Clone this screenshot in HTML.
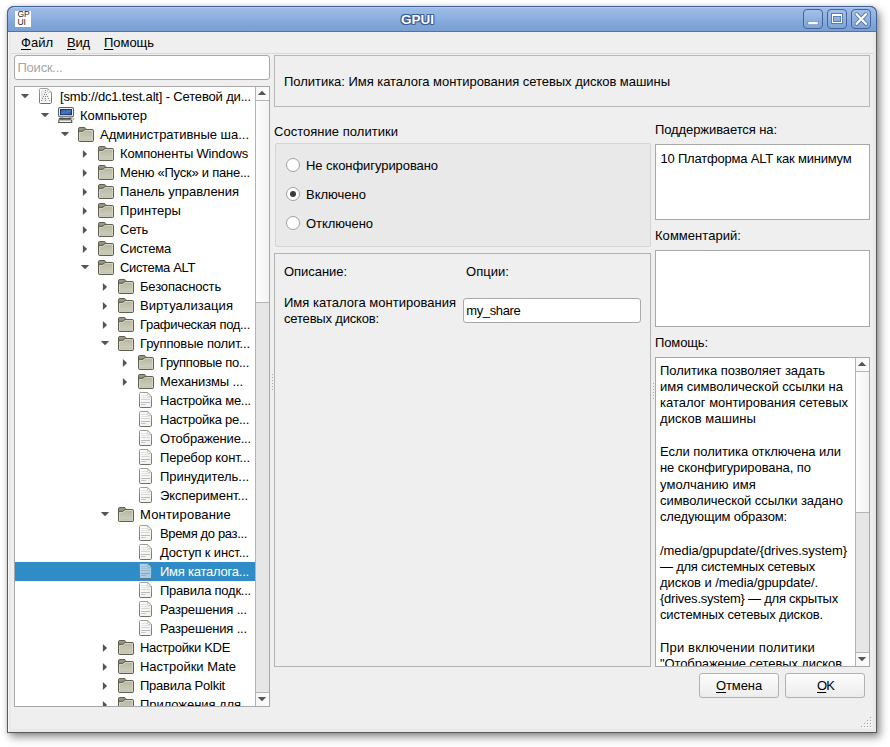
<!DOCTYPE html>
<html lang="ru"><head><meta charset="utf-8"><title>GPUI</title>
<style>
*{box-sizing:border-box;margin:0;padding:0}
html,body{width:890px;height:747px;overflow:hidden;background:#fff}
body{position:relative;font-family:"Liberation Sans","DejaVu Sans",sans-serif;font-size:13px;color:#000;-webkit-font-smoothing:antialiased}
.abs{position:absolute}
.t{position:absolute;white-space:nowrap;line-height:16px;height:16px}
u{text-decoration:underline;text-decoration-thickness:1px;text-underline-offset:2px;text-decoration-skip-ink:none}
#win{position:absolute;left:7px;top:6px;width:870px;height:727px;background:#efefef;border:1px solid #5a5856;border-top-color:#3c5a8e;border-top-left-radius:7px 7px;border-top-right-radius:7px 7px;box-shadow:3px 4px 9px rgba(0,0,0,.45),0 0 4px rgba(0,0,0,.12),inset 1px 0 0 #f8f8f8,inset 3px 0 0 #ebe9e7,inset -3px 0 0 #ebe9e7,inset 0 -3px 0 #ebe9e7}
#title{position:absolute;left:7px;top:6px;width:870px;height:26px;border-radius:7px 7px 0 0;background:linear-gradient(#9fbde7 0%,#94b5e2 30%,#7fa5d8 75%,#7a9fd2 100%);border:1px solid #40609a;border-bottom-color:#4f74ab;box-shadow:inset 0 1px 0 #b4cdee}
#titletxt{position:absolute;left:35px;top:10px;width:765px;text-align:center;color:#fff;font-weight:bold;font-size:13.5px;letter-spacing:0;line-height:19px;text-shadow:0 0 1px #2c4e86,1px 1px 0 #3a5f99,-1px -1px 0 #3a5f99,1px -1px 0 #3a5f99,-1px 1px 0 #3a5f99}
.wb{position:absolute;top:9px;width:20px;height:20px;border:1px solid #43659c;border-radius:4px;background:linear-gradient(#a4c0e8,#7ea4d8)}
#appicon{position:absolute;left:15px;top:11px;width:16px;height:16px;background:#fff;font-size:8.5px;line-height:7.6px;color:#1c1c1c;padding:.4px 0 0 2.5px;letter-spacing:-.2px;overflow:hidden}
.frame{position:absolute;background:#fff;border:1px solid #a8a8a8}
.gb{position:absolute;background:#e9e9e9;border:1px solid #d4d4d4;border-radius:2px}
.row{position:absolute;left:15px;width:240px;height:19px}
.sel{background:#308cc6}
.btn{position:absolute;height:25px;border:1px solid #b1b1b1;border-radius:3px;background:linear-gradient(#fdfdfd,#ececec);text-align:center;line-height:23px}
.sb{position:absolute;width:14px;background:#e6e6e6;border-left:1px solid #b4b4b4}
.sbb{position:absolute;left:0;width:13px;height:14px;background:linear-gradient(90deg,#f6f6f6,#fbfbfb)}
.thumb{position:absolute;left:0;width:13px;background:linear-gradient(90deg,#fdfdfd,#f3f3f3);border-top:1px solid #b4b4b4;border-bottom:1px solid #b4b4b4}
.radio{position:absolute;width:14px;height:14px;border-radius:50%;border:1px solid #a0a0a0;background:#fff}
.radio.on:after{content:"";position:absolute;left:3px;top:3px;width:6px;height:6px;border-radius:50%;background:#3c3c3c}
svg{position:absolute;overflow:visible}
</style></head>
<body>
<svg width="0" height="0" style="left:0;top:0"><defs><linearGradient id="fg" x1="0" y1="0" x2="0" y2="1"><stop offset="0" stop-color="#b7b7a1"/><stop offset="1" stop-color="#cfcfc0"/></linearGradient><linearGradient id="dg" x1="0" y1="0" x2="1" y2="1"><stop offset="0" stop-color="#fff"/><stop offset="1" stop-color="#efefed"/></linearGradient><linearGradient id="ds" x1="0" y1="0" x2="0" y2="1"><stop offset="0" stop-color="#9c9c98"/><stop offset="1" stop-color="#6e6e6a"/></linearGradient><linearGradient id="rg" x1="0" y1="0" x2="1" y2="0"><stop offset="0" stop-color="#e4e4e1"/><stop offset="1" stop-color="#f8f8f7"/></linearGradient><linearGradient id="cg" x1="0" y1="0" x2="1" y2="1"><stop offset="0" stop-color="#2f5ca3"/><stop offset=".5" stop-color="#4170b8"/><stop offset="1" stop-color="#2e5ba3"/></linearGradient></defs></svg>
<div id="win"></div>
<div id="title"></div>
<div id="appicon">GP<br>UI</div>
<div id="titletxt">GPUI</div>
<div class="wb" style="left:803px"></div><div class="wb" style="left:827px"></div><div class="wb" style="left:851px"></div>
<svg width="20" height="20" viewBox="0 0 20 20" style="left:803px;top:9px"><rect x="4.5" y="12.2" width="11" height="3.6" fill="#5b7cb2" opacity=".85"/><rect x="5.2" y="12.8" width="9.6" height="2.5" fill="#fff"/></svg>
<svg width="20" height="20" viewBox="0 0 20 20" style="left:827px;top:9px"><rect x="4.5" y="4.5" width="11" height="10" fill="none" stroke="#5677ad" stroke-width="1" opacity=".9"/><rect x="6.5" y="7.5" width="7" height="5" fill="none" stroke="#5677ad" stroke-width="1" opacity=".8"/><path fill-rule="evenodd" d="M5 5H15V14H5ZM6 7V13H14V7Z" fill="#fff"/></svg>
<svg width="21" height="20" viewBox="0 0 21 20" style="left:851px;top:9px"><path d="M5.6 5.2L14.9 14.8M14.9 5.2L5.6 14.8" stroke="#5273aa" stroke-width="3.9" stroke-linecap="round"/><path d="M5.6 5.2L14.9 14.8M14.9 5.2L5.6 14.8" stroke="#fff" stroke-width="2.3" stroke-linecap="round"/></svg>
<span class="t " style="left:21px;top:35px;letter-spacing:0.008px;"><u>Ф</u>айл</span>
<span class="t " style="left:67px;top:35px;letter-spacing:-0.177px;"><u>В</u>ид</span>
<span class="t " style="left:104px;top:35px;letter-spacing:-0.036px;"><u>П</u>омощь</span>
<div class="abs" style="left:11px;top:53px;width:862px;height:1px;background:#d9d9d9"></div>
<div class="abs" style="left:14px;top:55px;width:256px;height:25px;background:#fff;border:1px solid #a9a9a9;border-radius:3px"></div>
<span class="t " style="left:17.5px;top:60px;letter-spacing:-0.232px;color:#a6a6a6">Поиск...</span>
<div class="frame" style="left:14px;top:86px;width:256px;height:621px;overflow:hidden" id="tree"></div>
<div class="abs" style="left:15px;top:87px;width:240px;height:619px;overflow:hidden">
<svg width="10" height="6" viewBox="0 0 10 6" style="left:5px;top:6.0px"><path d="M0.8 0.9H9.2L5 5.2Z" fill="#555"/></svg>
<svg width="16" height="16" viewBox="0 0 16 16" style="left:23px;top:1px"><path d="M2.7 0.5H9.7L13.5 4.3V14.3Q13.5 15.5 12.3 15.5H2.7Q1.5 15.5 1.5 14.3V1.7Q1.5 0.5 2.7 0.5Z" fill="#fff" stroke="url(#ds)"/><rect x="3" y="2" width="8.7" height="11.7" fill="url(#rg)"/><path d="M9.6 1V3.4Q9.6 4.5 10.7 4.5H13.1Z" fill="#fff" stroke="#a9a9a5" stroke-width=".55"/><path d="M7 2.5h1M7 4.5h1M6 6.5h1M8 6.5h1M5 8.5h1M7 8.5h1M9 8.5h1M4 10.5h1M7 10.5h1M10 10.5h1M3 12.5h1M7 12.5h1M11 12.5h1" stroke="#8d8d89"/></svg>
<span class="t " style="left:45px;top:2px;letter-spacing:-0.161px;">[smb://dc1.test.alt] - Сетевой ди...</span>
<svg width="10" height="6" viewBox="0 0 10 6" style="left:25px;top:25.0px"><path d="M0.8 0.9H9.2L5 5.2Z" fill="#555"/></svg>
<svg width="16" height="16" viewBox="0 0 16 16" style="left:43px;top:20px"><rect x=".5" y=".5" width="15" height="9.4" rx="1.6" fill="#f1f1f1" stroke="#616161" stroke-width="1.1"/><rect x="2" y="2" width="12" height="6.2" fill="#0f2d6b"/><rect x="2.8" y="2.8" width="10.4" height="4.6" fill="url(#cg)"/><path d="M4 6.8L7 3.6M8 6.8L10.4 3.9H12.6" stroke="#6f97d2" stroke-width=".7" fill="none" opacity=".8"/><path d="M5.6 10.2H10.4L11 11.5H5Z" fill="#cfcfcf"/><path d="M1.3 11.6H13.1L13.9 15.5H.6Z" fill="#f5f5f5" stroke="#525252" stroke-width="1.1" stroke-linejoin="round"/><path d="M1.8 12.7H13" stroke="#6f6f6f" stroke-width="1.4"/><path d="M4.3 10.9V12M11.3 10.9V12" stroke="#444" stroke-width=".9"/><ellipse cx="14.5" cy="12.1" rx="1.4" ry="1" fill="#f6f6f6" stroke="#8f8f8f" stroke-width=".7"/></svg>
<span class="t " style="left:65px;top:21px;letter-spacing:-0.033px;">Компьютер</span>
<svg width="10" height="6" viewBox="0 0 10 6" style="left:45px;top:44.0px"><path d="M0.8 0.9H9.2L5 5.2Z" fill="#555"/></svg>
<svg width="16" height="16" viewBox="0 0 16 16" style="left:63px;top:39px"><path d="M0.5 2.7Q0.5 1.5 1.7 1.5L6.3 1.5Q7.2 1.5 7.6 2.4L8.1 3.5L14.3 3.5Q15.5 3.5 15.5 4.7L15.5 14.3Q15.5 15.5 14.3 15.5L1.7 15.5Q0.5 15.5 0.5 14.3Z" fill="#8e8e7a" stroke="#5f5f4f"/><path d="M1.6 2.9H6.6" stroke="#a3a38f" stroke-width=".9"/><path d="M1.5 6.5H4.9L7.1 4.5H14.5V14.5H1.5Z" fill="url(#fg)" stroke="#d9d9c9" stroke-width=".9" stroke-linejoin="round"/><path d="M2 14H14" stroke="#b9b9a5" stroke-width=".7"/><path d="M0.6 5.4H4.5L6.7 3.5H8.2" fill="none" stroke="#5f5f4f" stroke-width=".9"/></svg>
<span class="t " style="left:85px;top:40px;letter-spacing:-0.023px;">Административные ша...</span>
<svg width="6" height="10" viewBox="0 0 6 10" style="left:67px;top:61.5px"><path d="M0.9 0.9V9.1L5.1 5Z" fill="#555"/></svg>
<svg width="16" height="16" viewBox="0 0 16 16" style="left:83px;top:58px"><path d="M0.5 2.7Q0.5 1.5 1.7 1.5L6.3 1.5Q7.2 1.5 7.6 2.4L8.1 3.5L14.3 3.5Q15.5 3.5 15.5 4.7L15.5 14.3Q15.5 15.5 14.3 15.5L1.7 15.5Q0.5 15.5 0.5 14.3Z" fill="#8e8e7a" stroke="#5f5f4f"/><path d="M1.6 2.9H6.6" stroke="#a3a38f" stroke-width=".9"/><path d="M1.5 6.5H4.9L7.1 4.5H14.5V14.5H1.5Z" fill="url(#fg)" stroke="#d9d9c9" stroke-width=".9" stroke-linejoin="round"/><path d="M2 14H14" stroke="#b9b9a5" stroke-width=".7"/><path d="M0.6 5.4H4.5L6.7 3.5H8.2" fill="none" stroke="#5f5f4f" stroke-width=".9"/></svg>
<span class="t " style="left:105px;top:59px;letter-spacing:-0.181px;">Компоненты Windows</span>
<svg width="6" height="10" viewBox="0 0 6 10" style="left:67px;top:80.5px"><path d="M0.9 0.9V9.1L5.1 5Z" fill="#555"/></svg>
<svg width="16" height="16" viewBox="0 0 16 16" style="left:83px;top:77px"><path d="M0.5 2.7Q0.5 1.5 1.7 1.5L6.3 1.5Q7.2 1.5 7.6 2.4L8.1 3.5L14.3 3.5Q15.5 3.5 15.5 4.7L15.5 14.3Q15.5 15.5 14.3 15.5L1.7 15.5Q0.5 15.5 0.5 14.3Z" fill="#8e8e7a" stroke="#5f5f4f"/><path d="M1.6 2.9H6.6" stroke="#a3a38f" stroke-width=".9"/><path d="M1.5 6.5H4.9L7.1 4.5H14.5V14.5H1.5Z" fill="url(#fg)" stroke="#d9d9c9" stroke-width=".9" stroke-linejoin="round"/><path d="M2 14H14" stroke="#b9b9a5" stroke-width=".7"/><path d="M0.6 5.4H4.5L6.7 3.5H8.2" fill="none" stroke="#5f5f4f" stroke-width=".9"/></svg>
<span class="t " style="left:105px;top:78px;letter-spacing:-0.243px;">Меню «Пуск» и пане...</span>
<svg width="6" height="10" viewBox="0 0 6 10" style="left:67px;top:99.5px"><path d="M0.9 0.9V9.1L5.1 5Z" fill="#555"/></svg>
<svg width="16" height="16" viewBox="0 0 16 16" style="left:83px;top:96px"><path d="M0.5 2.7Q0.5 1.5 1.7 1.5L6.3 1.5Q7.2 1.5 7.6 2.4L8.1 3.5L14.3 3.5Q15.5 3.5 15.5 4.7L15.5 14.3Q15.5 15.5 14.3 15.5L1.7 15.5Q0.5 15.5 0.5 14.3Z" fill="#8e8e7a" stroke="#5f5f4f"/><path d="M1.6 2.9H6.6" stroke="#a3a38f" stroke-width=".9"/><path d="M1.5 6.5H4.9L7.1 4.5H14.5V14.5H1.5Z" fill="url(#fg)" stroke="#d9d9c9" stroke-width=".9" stroke-linejoin="round"/><path d="M2 14H14" stroke="#b9b9a5" stroke-width=".7"/><path d="M0.6 5.4H4.5L6.7 3.5H8.2" fill="none" stroke="#5f5f4f" stroke-width=".9"/></svg>
<span class="t " style="left:105px;top:97px;letter-spacing:-0.026px;">Панель управления</span>
<svg width="6" height="10" viewBox="0 0 6 10" style="left:67px;top:118.5px"><path d="M0.9 0.9V9.1L5.1 5Z" fill="#555"/></svg>
<svg width="16" height="16" viewBox="0 0 16 16" style="left:83px;top:115px"><path d="M0.5 2.7Q0.5 1.5 1.7 1.5L6.3 1.5Q7.2 1.5 7.6 2.4L8.1 3.5L14.3 3.5Q15.5 3.5 15.5 4.7L15.5 14.3Q15.5 15.5 14.3 15.5L1.7 15.5Q0.5 15.5 0.5 14.3Z" fill="#8e8e7a" stroke="#5f5f4f"/><path d="M1.6 2.9H6.6" stroke="#a3a38f" stroke-width=".9"/><path d="M1.5 6.5H4.9L7.1 4.5H14.5V14.5H1.5Z" fill="url(#fg)" stroke="#d9d9c9" stroke-width=".9" stroke-linejoin="round"/><path d="M2 14H14" stroke="#b9b9a5" stroke-width=".7"/><path d="M0.6 5.4H4.5L6.7 3.5H8.2" fill="none" stroke="#5f5f4f" stroke-width=".9"/></svg>
<span class="t " style="left:105px;top:116px;letter-spacing:0.045px;">Принтеры</span>
<svg width="6" height="10" viewBox="0 0 6 10" style="left:67px;top:137.5px"><path d="M0.9 0.9V9.1L5.1 5Z" fill="#555"/></svg>
<svg width="16" height="16" viewBox="0 0 16 16" style="left:83px;top:134px"><path d="M0.5 2.7Q0.5 1.5 1.7 1.5L6.3 1.5Q7.2 1.5 7.6 2.4L8.1 3.5L14.3 3.5Q15.5 3.5 15.5 4.7L15.5 14.3Q15.5 15.5 14.3 15.5L1.7 15.5Q0.5 15.5 0.5 14.3Z" fill="#8e8e7a" stroke="#5f5f4f"/><path d="M1.6 2.9H6.6" stroke="#a3a38f" stroke-width=".9"/><path d="M1.5 6.5H4.9L7.1 4.5H14.5V14.5H1.5Z" fill="url(#fg)" stroke="#d9d9c9" stroke-width=".9" stroke-linejoin="round"/><path d="M2 14H14" stroke="#b9b9a5" stroke-width=".7"/><path d="M0.6 5.4H4.5L6.7 3.5H8.2" fill="none" stroke="#5f5f4f" stroke-width=".9"/></svg>
<span class="t " style="left:105px;top:135px;letter-spacing:-0.23px;">Сеть</span>
<svg width="6" height="10" viewBox="0 0 6 10" style="left:67px;top:156.5px"><path d="M0.9 0.9V9.1L5.1 5Z" fill="#555"/></svg>
<svg width="16" height="16" viewBox="0 0 16 16" style="left:83px;top:153px"><path d="M0.5 2.7Q0.5 1.5 1.7 1.5L6.3 1.5Q7.2 1.5 7.6 2.4L8.1 3.5L14.3 3.5Q15.5 3.5 15.5 4.7L15.5 14.3Q15.5 15.5 14.3 15.5L1.7 15.5Q0.5 15.5 0.5 14.3Z" fill="#8e8e7a" stroke="#5f5f4f"/><path d="M1.6 2.9H6.6" stroke="#a3a38f" stroke-width=".9"/><path d="M1.5 6.5H4.9L7.1 4.5H14.5V14.5H1.5Z" fill="url(#fg)" stroke="#d9d9c9" stroke-width=".9" stroke-linejoin="round"/><path d="M2 14H14" stroke="#b9b9a5" stroke-width=".7"/><path d="M0.6 5.4H4.5L6.7 3.5H8.2" fill="none" stroke="#5f5f4f" stroke-width=".9"/></svg>
<span class="t " style="left:105px;top:154px;letter-spacing:-0.194px;">Система</span>
<svg width="10" height="6" viewBox="0 0 10 6" style="left:65px;top:177.0px"><path d="M0.8 0.9H9.2L5 5.2Z" fill="#555"/></svg>
<svg width="16" height="16" viewBox="0 0 16 16" style="left:83px;top:172px"><path d="M0.5 2.7Q0.5 1.5 1.7 1.5L6.3 1.5Q7.2 1.5 7.6 2.4L8.1 3.5L14.3 3.5Q15.5 3.5 15.5 4.7L15.5 14.3Q15.5 15.5 14.3 15.5L1.7 15.5Q0.5 15.5 0.5 14.3Z" fill="#8e8e7a" stroke="#5f5f4f"/><path d="M1.6 2.9H6.6" stroke="#a3a38f" stroke-width=".9"/><path d="M1.5 6.5H4.9L7.1 4.5H14.5V14.5H1.5Z" fill="url(#fg)" stroke="#d9d9c9" stroke-width=".9" stroke-linejoin="round"/><path d="M2 14H14" stroke="#b9b9a5" stroke-width=".7"/><path d="M0.6 5.4H4.5L6.7 3.5H8.2" fill="none" stroke="#5f5f4f" stroke-width=".9"/></svg>
<span class="t " style="left:105px;top:173px;letter-spacing:-0.351px;">Система ALT</span>
<svg width="6" height="10" viewBox="0 0 6 10" style="left:87px;top:194.5px"><path d="M0.9 0.9V9.1L5.1 5Z" fill="#555"/></svg>
<svg width="16" height="16" viewBox="0 0 16 16" style="left:103px;top:191px"><path d="M0.5 2.7Q0.5 1.5 1.7 1.5L6.3 1.5Q7.2 1.5 7.6 2.4L8.1 3.5L14.3 3.5Q15.5 3.5 15.5 4.7L15.5 14.3Q15.5 15.5 14.3 15.5L1.7 15.5Q0.5 15.5 0.5 14.3Z" fill="#8e8e7a" stroke="#5f5f4f"/><path d="M1.6 2.9H6.6" stroke="#a3a38f" stroke-width=".9"/><path d="M1.5 6.5H4.9L7.1 4.5H14.5V14.5H1.5Z" fill="url(#fg)" stroke="#d9d9c9" stroke-width=".9" stroke-linejoin="round"/><path d="M2 14H14" stroke="#b9b9a5" stroke-width=".7"/><path d="M0.6 5.4H4.5L6.7 3.5H8.2" fill="none" stroke="#5f5f4f" stroke-width=".9"/></svg>
<span class="t " style="left:125px;top:192px;letter-spacing:-0.161px;">Безопасность</span>
<svg width="6" height="10" viewBox="0 0 6 10" style="left:87px;top:213.5px"><path d="M0.9 0.9V9.1L5.1 5Z" fill="#555"/></svg>
<svg width="16" height="16" viewBox="0 0 16 16" style="left:103px;top:210px"><path d="M0.5 2.7Q0.5 1.5 1.7 1.5L6.3 1.5Q7.2 1.5 7.6 2.4L8.1 3.5L14.3 3.5Q15.5 3.5 15.5 4.7L15.5 14.3Q15.5 15.5 14.3 15.5L1.7 15.5Q0.5 15.5 0.5 14.3Z" fill="#8e8e7a" stroke="#5f5f4f"/><path d="M1.6 2.9H6.6" stroke="#a3a38f" stroke-width=".9"/><path d="M1.5 6.5H4.9L7.1 4.5H14.5V14.5H1.5Z" fill="url(#fg)" stroke="#d9d9c9" stroke-width=".9" stroke-linejoin="round"/><path d="M2 14H14" stroke="#b9b9a5" stroke-width=".7"/><path d="M0.6 5.4H4.5L6.7 3.5H8.2" fill="none" stroke="#5f5f4f" stroke-width=".9"/></svg>
<span class="t " style="left:125px;top:211px;letter-spacing:0.049px;">Виртуализация</span>
<svg width="6" height="10" viewBox="0 0 6 10" style="left:87px;top:232.5px"><path d="M0.9 0.9V9.1L5.1 5Z" fill="#555"/></svg>
<svg width="16" height="16" viewBox="0 0 16 16" style="left:103px;top:229px"><path d="M0.5 2.7Q0.5 1.5 1.7 1.5L6.3 1.5Q7.2 1.5 7.6 2.4L8.1 3.5L14.3 3.5Q15.5 3.5 15.5 4.7L15.5 14.3Q15.5 15.5 14.3 15.5L1.7 15.5Q0.5 15.5 0.5 14.3Z" fill="#8e8e7a" stroke="#5f5f4f"/><path d="M1.6 2.9H6.6" stroke="#a3a38f" stroke-width=".9"/><path d="M1.5 6.5H4.9L7.1 4.5H14.5V14.5H1.5Z" fill="url(#fg)" stroke="#d9d9c9" stroke-width=".9" stroke-linejoin="round"/><path d="M2 14H14" stroke="#b9b9a5" stroke-width=".7"/><path d="M0.6 5.4H4.5L6.7 3.5H8.2" fill="none" stroke="#5f5f4f" stroke-width=".9"/></svg>
<span class="t " style="left:125px;top:230px;letter-spacing:-0.306px;">Графическая под...</span>
<svg width="10" height="6" viewBox="0 0 10 6" style="left:85px;top:253.0px"><path d="M0.8 0.9H9.2L5 5.2Z" fill="#555"/></svg>
<svg width="16" height="16" viewBox="0 0 16 16" style="left:103px;top:248px"><path d="M0.5 2.7Q0.5 1.5 1.7 1.5L6.3 1.5Q7.2 1.5 7.6 2.4L8.1 3.5L14.3 3.5Q15.5 3.5 15.5 4.7L15.5 14.3Q15.5 15.5 14.3 15.5L1.7 15.5Q0.5 15.5 0.5 14.3Z" fill="#8e8e7a" stroke="#5f5f4f"/><path d="M1.6 2.9H6.6" stroke="#a3a38f" stroke-width=".9"/><path d="M1.5 6.5H4.9L7.1 4.5H14.5V14.5H1.5Z" fill="url(#fg)" stroke="#d9d9c9" stroke-width=".9" stroke-linejoin="round"/><path d="M2 14H14" stroke="#b9b9a5" stroke-width=".7"/><path d="M0.6 5.4H4.5L6.7 3.5H8.2" fill="none" stroke="#5f5f4f" stroke-width=".9"/></svg>
<span class="t " style="left:125px;top:249px;letter-spacing:-0.138px;">Групповые полит...</span>
<svg width="6" height="10" viewBox="0 0 6 10" style="left:107px;top:270.5px"><path d="M0.9 0.9V9.1L5.1 5Z" fill="#555"/></svg>
<svg width="16" height="16" viewBox="0 0 16 16" style="left:123px;top:267px"><path d="M0.5 2.7Q0.5 1.5 1.7 1.5L6.3 1.5Q7.2 1.5 7.6 2.4L8.1 3.5L14.3 3.5Q15.5 3.5 15.5 4.7L15.5 14.3Q15.5 15.5 14.3 15.5L1.7 15.5Q0.5 15.5 0.5 14.3Z" fill="#8e8e7a" stroke="#5f5f4f"/><path d="M1.6 2.9H6.6" stroke="#a3a38f" stroke-width=".9"/><path d="M1.5 6.5H4.9L7.1 4.5H14.5V14.5H1.5Z" fill="url(#fg)" stroke="#d9d9c9" stroke-width=".9" stroke-linejoin="round"/><path d="M2 14H14" stroke="#b9b9a5" stroke-width=".7"/><path d="M0.6 5.4H4.5L6.7 3.5H8.2" fill="none" stroke="#5f5f4f" stroke-width=".9"/></svg>
<span class="t " style="left:145px;top:268px;letter-spacing:-0.294px;">Групповые по...</span>
<svg width="6" height="10" viewBox="0 0 6 10" style="left:107px;top:289.5px"><path d="M0.9 0.9V9.1L5.1 5Z" fill="#555"/></svg>
<svg width="16" height="16" viewBox="0 0 16 16" style="left:123px;top:286px"><path d="M0.5 2.7Q0.5 1.5 1.7 1.5L6.3 1.5Q7.2 1.5 7.6 2.4L8.1 3.5L14.3 3.5Q15.5 3.5 15.5 4.7L15.5 14.3Q15.5 15.5 14.3 15.5L1.7 15.5Q0.5 15.5 0.5 14.3Z" fill="#8e8e7a" stroke="#5f5f4f"/><path d="M1.6 2.9H6.6" stroke="#a3a38f" stroke-width=".9"/><path d="M1.5 6.5H4.9L7.1 4.5H14.5V14.5H1.5Z" fill="url(#fg)" stroke="#d9d9c9" stroke-width=".9" stroke-linejoin="round"/><path d="M2 14H14" stroke="#b9b9a5" stroke-width=".7"/><path d="M0.6 5.4H4.5L6.7 3.5H8.2" fill="none" stroke="#5f5f4f" stroke-width=".9"/></svg>
<span class="t " style="left:145px;top:287px;letter-spacing:-0.126px;">Механизмы ...</span>
<svg width="16" height="16" viewBox="0 0 16 16" style="left:123px;top:305px"><path d="M2.7 0.5H9.7L13.5 4.3V14.3Q13.5 15.5 12.3 15.5H2.7Q1.5 15.5 1.5 14.3V1.7Q1.5 0.5 2.7 0.5Z" fill="url(#dg)" stroke="url(#ds)"/><path d="M9.6 1V3.4Q9.6 4.5 10.7 4.5H13.1Z" fill="#fff" stroke="#a9a9a5" stroke-width=".55"/><path d="M3 3.5H9M3 5.5H12" stroke="#e3e3e0"/><path d="M3 7.5H12" stroke="#d6d6d3"/><path d="M3 10.5H12" stroke="#b9b9b6"/><path d="M3 12.5H7.7" stroke="#c4c4c1"/></svg>
<span class="t " style="left:145px;top:306px;letter-spacing:-0.242px;">Настройка ме...</span>
<svg width="16" height="16" viewBox="0 0 16 16" style="left:123px;top:324px"><path d="M2.7 0.5H9.7L13.5 4.3V14.3Q13.5 15.5 12.3 15.5H2.7Q1.5 15.5 1.5 14.3V1.7Q1.5 0.5 2.7 0.5Z" fill="url(#dg)" stroke="url(#ds)"/><path d="M9.6 1V3.4Q9.6 4.5 10.7 4.5H13.1Z" fill="#fff" stroke="#a9a9a5" stroke-width=".55"/><path d="M3 3.5H9M3 5.5H12" stroke="#e3e3e0"/><path d="M3 7.5H12" stroke="#d6d6d3"/><path d="M3 10.5H12" stroke="#b9b9b6"/><path d="M3 12.5H7.7" stroke="#c4c4c1"/></svg>
<span class="t " style="left:145px;top:325px;letter-spacing:-0.26px;">Настройка ре...</span>
<svg width="16" height="16" viewBox="0 0 16 16" style="left:123px;top:343px"><path d="M2.7 0.5H9.7L13.5 4.3V14.3Q13.5 15.5 12.3 15.5H2.7Q1.5 15.5 1.5 14.3V1.7Q1.5 0.5 2.7 0.5Z" fill="url(#dg)" stroke="url(#ds)"/><path d="M9.6 1V3.4Q9.6 4.5 10.7 4.5H13.1Z" fill="#fff" stroke="#a9a9a5" stroke-width=".55"/><path d="M3 3.5H9M3 5.5H12" stroke="#e3e3e0"/><path d="M3 7.5H12" stroke="#d6d6d3"/><path d="M3 10.5H12" stroke="#b9b9b6"/><path d="M3 12.5H7.7" stroke="#c4c4c1"/></svg>
<span class="t " style="left:145px;top:344px;letter-spacing:-0.179px;">Отображение...</span>
<svg width="16" height="16" viewBox="0 0 16 16" style="left:123px;top:362px"><path d="M2.7 0.5H9.7L13.5 4.3V14.3Q13.5 15.5 12.3 15.5H2.7Q1.5 15.5 1.5 14.3V1.7Q1.5 0.5 2.7 0.5Z" fill="url(#dg)" stroke="url(#ds)"/><path d="M9.6 1V3.4Q9.6 4.5 10.7 4.5H13.1Z" fill="#fff" stroke="#a9a9a5" stroke-width=".55"/><path d="M3 3.5H9M3 5.5H12" stroke="#e3e3e0"/><path d="M3 7.5H12" stroke="#d6d6d3"/><path d="M3 10.5H12" stroke="#b9b9b6"/><path d="M3 12.5H7.7" stroke="#c4c4c1"/></svg>
<span class="t " style="left:145px;top:363px;letter-spacing:-0.133px;">Перебор конт...</span>
<svg width="16" height="16" viewBox="0 0 16 16" style="left:123px;top:381px"><path d="M2.7 0.5H9.7L13.5 4.3V14.3Q13.5 15.5 12.3 15.5H2.7Q1.5 15.5 1.5 14.3V1.7Q1.5 0.5 2.7 0.5Z" fill="url(#dg)" stroke="url(#ds)"/><path d="M9.6 1V3.4Q9.6 4.5 10.7 4.5H13.1Z" fill="#fff" stroke="#a9a9a5" stroke-width=".55"/><path d="M3 3.5H9M3 5.5H12" stroke="#e3e3e0"/><path d="M3 7.5H12" stroke="#d6d6d3"/><path d="M3 10.5H12" stroke="#b9b9b6"/><path d="M3 12.5H7.7" stroke="#c4c4c1"/></svg>
<span class="t " style="left:145px;top:382px;letter-spacing:-0.052px;">Принудитель...</span>
<svg width="16" height="16" viewBox="0 0 16 16" style="left:123px;top:400px"><path d="M2.7 0.5H9.7L13.5 4.3V14.3Q13.5 15.5 12.3 15.5H2.7Q1.5 15.5 1.5 14.3V1.7Q1.5 0.5 2.7 0.5Z" fill="url(#dg)" stroke="url(#ds)"/><path d="M9.6 1V3.4Q9.6 4.5 10.7 4.5H13.1Z" fill="#fff" stroke="#a9a9a5" stroke-width=".55"/><path d="M3 3.5H9M3 5.5H12" stroke="#e3e3e0"/><path d="M3 7.5H12" stroke="#d6d6d3"/><path d="M3 10.5H12" stroke="#b9b9b6"/><path d="M3 12.5H7.7" stroke="#c4c4c1"/></svg>
<span class="t " style="left:145px;top:401px;letter-spacing:-0.081px;">Эксперимент...</span>
<svg width="10" height="6" viewBox="0 0 10 6" style="left:85px;top:424.0px"><path d="M0.8 0.9H9.2L5 5.2Z" fill="#555"/></svg>
<svg width="16" height="16" viewBox="0 0 16 16" style="left:103px;top:419px"><path d="M0.5 2.7Q0.5 1.5 1.7 1.5L6.3 1.5Q7.2 1.5 7.6 2.4L8.1 3.5L14.3 3.5Q15.5 3.5 15.5 4.7L15.5 14.3Q15.5 15.5 14.3 15.5L1.7 15.5Q0.5 15.5 0.5 14.3Z" fill="#8e8e7a" stroke="#5f5f4f"/><path d="M1.6 2.9H6.6" stroke="#a3a38f" stroke-width=".9"/><path d="M1.5 6.5H4.9L7.1 4.5H14.5V14.5H1.5Z" fill="url(#fg)" stroke="#d9d9c9" stroke-width=".9" stroke-linejoin="round"/><path d="M2 14H14" stroke="#b9b9a5" stroke-width=".7"/><path d="M0.6 5.4H4.5L6.7 3.5H8.2" fill="none" stroke="#5f5f4f" stroke-width=".9"/></svg>
<span class="t " style="left:125px;top:420px;letter-spacing:0.189px;">Монтирование</span>
<svg width="16" height="16" viewBox="0 0 16 16" style="left:123px;top:438px"><path d="M2.7 0.5H9.7L13.5 4.3V14.3Q13.5 15.5 12.3 15.5H2.7Q1.5 15.5 1.5 14.3V1.7Q1.5 0.5 2.7 0.5Z" fill="url(#dg)" stroke="url(#ds)"/><path d="M9.6 1V3.4Q9.6 4.5 10.7 4.5H13.1Z" fill="#fff" stroke="#a9a9a5" stroke-width=".55"/><path d="M3 3.5H9M3 5.5H12" stroke="#e3e3e0"/><path d="M3 7.5H12" stroke="#d6d6d3"/><path d="M3 10.5H12" stroke="#b9b9b6"/><path d="M3 12.5H7.7" stroke="#c4c4c1"/></svg>
<span class="t " style="left:145px;top:439px;letter-spacing:-0.351px;">Время до раз...</span>
<svg width="16" height="16" viewBox="0 0 16 16" style="left:123px;top:457px"><path d="M2.7 0.5H9.7L13.5 4.3V14.3Q13.5 15.5 12.3 15.5H2.7Q1.5 15.5 1.5 14.3V1.7Q1.5 0.5 2.7 0.5Z" fill="url(#dg)" stroke="url(#ds)"/><path d="M9.6 1V3.4Q9.6 4.5 10.7 4.5H13.1Z" fill="#fff" stroke="#a9a9a5" stroke-width=".55"/><path d="M3 3.5H9M3 5.5H12" stroke="#e3e3e0"/><path d="M3 7.5H12" stroke="#d6d6d3"/><path d="M3 10.5H12" stroke="#b9b9b6"/><path d="M3 12.5H7.7" stroke="#c4c4c1"/></svg>
<span class="t " style="left:145px;top:458px;letter-spacing:-0.158px;">Доступ к инст...</span>
<div class="abs sel" style="left:0px;top:475px;width:240px;height:19px"></div>
<svg width="16" height="16" viewBox="0 0 16 16" style="left:123px;top:476px"><path d="M2.7 0.5H9.7L13.5 4.3V14.3Q13.5 15.5 12.3 15.5H2.7Q1.5 15.5 1.5 14.3V1.7Q1.5 0.5 2.7 0.5Z" fill="url(#dg)" stroke="url(#ds)"/><path d="M9.6 1V3.4Q9.6 4.5 10.7 4.5H13.1Z" fill="#fff" stroke="#a9a9a5" stroke-width=".55"/><path d="M3 3.5H9M3 5.5H12" stroke="#e3e3e0"/><path d="M3 7.5H12" stroke="#d6d6d3"/><path d="M3 10.5H12" stroke="#b9b9b6"/><path d="M3 12.5H7.7" stroke="#c4c4c1"/></svg>
<div class="abs" style="left:124px;top:476px;width:13px;height:16px;background:rgba(48,140,198,.38);border-radius:1px"></div>
<span class="t " style="left:145px;top:477px;letter-spacing:-0.225px;color:#fff">Имя каталога...</span>
<svg width="16" height="16" viewBox="0 0 16 16" style="left:123px;top:495px"><path d="M2.7 0.5H9.7L13.5 4.3V14.3Q13.5 15.5 12.3 15.5H2.7Q1.5 15.5 1.5 14.3V1.7Q1.5 0.5 2.7 0.5Z" fill="url(#dg)" stroke="url(#ds)"/><path d="M9.6 1V3.4Q9.6 4.5 10.7 4.5H13.1Z" fill="#fff" stroke="#a9a9a5" stroke-width=".55"/><path d="M3 3.5H9M3 5.5H12" stroke="#e3e3e0"/><path d="M3 7.5H12" stroke="#d6d6d3"/><path d="M3 10.5H12" stroke="#b9b9b6"/><path d="M3 12.5H7.7" stroke="#c4c4c1"/></svg>
<span class="t " style="left:145px;top:496px;letter-spacing:-0.233px;">Правила подк...</span>
<svg width="16" height="16" viewBox="0 0 16 16" style="left:123px;top:514px"><path d="M2.7 0.5H9.7L13.5 4.3V14.3Q13.5 15.5 12.3 15.5H2.7Q1.5 15.5 1.5 14.3V1.7Q1.5 0.5 2.7 0.5Z" fill="url(#dg)" stroke="url(#ds)"/><path d="M9.6 1V3.4Q9.6 4.5 10.7 4.5H13.1Z" fill="#fff" stroke="#a9a9a5" stroke-width=".55"/><path d="M3 3.5H9M3 5.5H12" stroke="#e3e3e0"/><path d="M3 7.5H12" stroke="#d6d6d3"/><path d="M3 10.5H12" stroke="#b9b9b6"/><path d="M3 12.5H7.7" stroke="#c4c4c1"/></svg>
<span class="t " style="left:145px;top:515px;letter-spacing:-0.167px;">Разрешения ...</span>
<svg width="16" height="16" viewBox="0 0 16 16" style="left:123px;top:533px"><path d="M2.7 0.5H9.7L13.5 4.3V14.3Q13.5 15.5 12.3 15.5H2.7Q1.5 15.5 1.5 14.3V1.7Q1.5 0.5 2.7 0.5Z" fill="url(#dg)" stroke="url(#ds)"/><path d="M9.6 1V3.4Q9.6 4.5 10.7 4.5H13.1Z" fill="#fff" stroke="#a9a9a5" stroke-width=".55"/><path d="M3 3.5H9M3 5.5H12" stroke="#e3e3e0"/><path d="M3 7.5H12" stroke="#d6d6d3"/><path d="M3 10.5H12" stroke="#b9b9b6"/><path d="M3 12.5H7.7" stroke="#c4c4c1"/></svg>
<span class="t " style="left:145px;top:534px;letter-spacing:-0.167px;">Разрешения ...</span>
<svg width="6" height="10" viewBox="0 0 6 10" style="left:87px;top:555.5px"><path d="M0.9 0.9V9.1L5.1 5Z" fill="#555"/></svg>
<svg width="16" height="16" viewBox="0 0 16 16" style="left:103px;top:552px"><path d="M0.5 2.7Q0.5 1.5 1.7 1.5L6.3 1.5Q7.2 1.5 7.6 2.4L8.1 3.5L14.3 3.5Q15.5 3.5 15.5 4.7L15.5 14.3Q15.5 15.5 14.3 15.5L1.7 15.5Q0.5 15.5 0.5 14.3Z" fill="#8e8e7a" stroke="#5f5f4f"/><path d="M1.6 2.9H6.6" stroke="#a3a38f" stroke-width=".9"/><path d="M1.5 6.5H4.9L7.1 4.5H14.5V14.5H1.5Z" fill="url(#fg)" stroke="#d9d9c9" stroke-width=".9" stroke-linejoin="round"/><path d="M2 14H14" stroke="#b9b9a5" stroke-width=".7"/><path d="M0.6 5.4H4.5L6.7 3.5H8.2" fill="none" stroke="#5f5f4f" stroke-width=".9"/></svg>
<span class="t " style="left:125px;top:553px;letter-spacing:-0.315px;">Настройки KDE</span>
<svg width="6" height="10" viewBox="0 0 6 10" style="left:87px;top:574.5px"><path d="M0.9 0.9V9.1L5.1 5Z" fill="#555"/></svg>
<svg width="16" height="16" viewBox="0 0 16 16" style="left:103px;top:571px"><path d="M0.5 2.7Q0.5 1.5 1.7 1.5L6.3 1.5Q7.2 1.5 7.6 2.4L8.1 3.5L14.3 3.5Q15.5 3.5 15.5 4.7L15.5 14.3Q15.5 15.5 14.3 15.5L1.7 15.5Q0.5 15.5 0.5 14.3Z" fill="#8e8e7a" stroke="#5f5f4f"/><path d="M1.6 2.9H6.6" stroke="#a3a38f" stroke-width=".9"/><path d="M1.5 6.5H4.9L7.1 4.5H14.5V14.5H1.5Z" fill="url(#fg)" stroke="#d9d9c9" stroke-width=".9" stroke-linejoin="round"/><path d="M2 14H14" stroke="#b9b9a5" stroke-width=".7"/><path d="M0.6 5.4H4.5L6.7 3.5H8.2" fill="none" stroke="#5f5f4f" stroke-width=".9"/></svg>
<span class="t " style="left:125px;top:572px;letter-spacing:-0.019px;">Настройки Mate</span>
<svg width="6" height="10" viewBox="0 0 6 10" style="left:87px;top:593.5px"><path d="M0.9 0.9V9.1L5.1 5Z" fill="#555"/></svg>
<svg width="16" height="16" viewBox="0 0 16 16" style="left:103px;top:590px"><path d="M0.5 2.7Q0.5 1.5 1.7 1.5L6.3 1.5Q7.2 1.5 7.6 2.4L8.1 3.5L14.3 3.5Q15.5 3.5 15.5 4.7L15.5 14.3Q15.5 15.5 14.3 15.5L1.7 15.5Q0.5 15.5 0.5 14.3Z" fill="#8e8e7a" stroke="#5f5f4f"/><path d="M1.6 2.9H6.6" stroke="#a3a38f" stroke-width=".9"/><path d="M1.5 6.5H4.9L7.1 4.5H14.5V14.5H1.5Z" fill="url(#fg)" stroke="#d9d9c9" stroke-width=".9" stroke-linejoin="round"/><path d="M2 14H14" stroke="#b9b9a5" stroke-width=".7"/><path d="M0.6 5.4H4.5L6.7 3.5H8.2" fill="none" stroke="#5f5f4f" stroke-width=".9"/></svg>
<span class="t " style="left:125px;top:591px;letter-spacing:-0.229px;">Правила Polkit</span>
<svg width="6" height="10" viewBox="0 0 6 10" style="left:87px;top:612.5px"><path d="M0.9 0.9V9.1L5.1 5Z" fill="#555"/></svg>
<svg width="16" height="16" viewBox="0 0 16 16" style="left:103px;top:609px"><path d="M0.5 2.7Q0.5 1.5 1.7 1.5L6.3 1.5Q7.2 1.5 7.6 2.4L8.1 3.5L14.3 3.5Q15.5 3.5 15.5 4.7L15.5 14.3Q15.5 15.5 14.3 15.5L1.7 15.5Q0.5 15.5 0.5 14.3Z" fill="#8e8e7a" stroke="#5f5f4f"/><path d="M1.6 2.9H6.6" stroke="#a3a38f" stroke-width=".9"/><path d="M1.5 6.5H4.9L7.1 4.5H14.5V14.5H1.5Z" fill="url(#fg)" stroke="#d9d9c9" stroke-width=".9" stroke-linejoin="round"/><path d="M2 14H14" stroke="#b9b9a5" stroke-width=".7"/><path d="M0.6 5.4H4.5L6.7 3.5H8.2" fill="none" stroke="#5f5f4f" stroke-width=".9"/></svg>
<span class="t " style="left:125px;top:610px;letter-spacing:-0.064px;">Приложения для</span>
</div>
<div class="sb" style="left:255px;top:87px;height:619px">
<div class="sbb" style="top:0"></div><div class="thumb" style="top:13px;height:203px"></div><div class="sbb" style="top:605px;border-top:1px solid #b4b4b4"></div>
</div>
<svg width="10" height="6" viewBox="0 0 10 6" style="left:257px;top:89.5px"><path d="M0.8 5.1H9.2L5 0.8Z" fill="#555"/></svg>
<svg width="10" height="6" viewBox="0 0 10 6" style="left:257px;top:696px"><path d="M0.8 0.9H9.2L5 5.2Z" fill="#555"/></svg>
<div class="gb" style="left:274px;top:55px;width:596px;height:52px;background:#efefef;border-color:#b6b6b6;border-radius:0"></div>
<span class="t " style="left:284px;top:74px;letter-spacing:-0.036px;">Политика: Имя каталога монтирования сетевых дисков машины</span>
<span class="t " style="left:274px;top:124px;letter-spacing:0.029px;">Состояние политики</span>
<div class="gb" style="left:275px;top:143px;width:376px;height:104px"></div>
<div class="radio" style="left:286px;top:158px"></div>
<span class="t " style="left:306px;top:158px;letter-spacing:-0.073px;">Не сконфигурировано</span>
<div class="radio on" style="left:286px;top:187px"></div>
<span class="t " style="left:306px;top:187px;letter-spacing:0.004px;">Включено</span>
<div class="radio" style="left:286px;top:216px"></div>
<span class="t " style="left:306px;top:216px;letter-spacing:-0.042px;">Отключено</span>
<div class="gb" style="left:274px;top:253px;width:377px;height:414px;background:#efefef;border-color:#b3b3b3;border-radius:0"></div>
<span class="t " style="left:284px;top:264px;letter-spacing:-0.049px;">Описание:</span>
<span class="t " style="left:466px;top:264px;letter-spacing:0.044px;">Опции:</span>
<span class="t " style="left:284px;top:295px;letter-spacing:0.014px;">Имя каталога монтирования</span>
<span class="t " style="left:284px;top:311px;letter-spacing:-0.176px;">сетевых дисков:</span>
<div class="abs" style="left:463px;top:298px;width:178px;height:25px;background:#fff;border:1px solid #a9a9a9;border-radius:3px"></div>
<span class="t " style="left:466.3px;top:303px;letter-spacing:-0.385px;">my_share</span>
<span class="t " style="left:655px;top:122px;letter-spacing:-0.092px;">Поддерживается на:</span>
<div class="frame" style="left:655px;top:144px;width:215px;height:76px"></div>
<span class="t " style="left:660.5px;top:151px;letter-spacing:-0.2px;">10 Платформа ALT как минимум</span>
<span class="t " style="left:655px;top:228px;letter-spacing:0.042px;">Комментарий:</span>
<div class="frame" style="left:655px;top:250px;width:215px;height:77px"></div>
<span class="t " style="left:655px;top:335px;letter-spacing:-0.118px;">Помощь:</span>
<div class="frame" style="left:655px;top:357px;width:215px;height:310px"></div>
<div class="abs" style="left:656px;top:358px;width:199px;height:308px;overflow:hidden">
<span class="t " style="left:4px;top:5px;letter-spacing:-0.056px;">Политика позволяет задать</span>
<span class="t " style="left:4px;top:21px;letter-spacing:-0.017px;">имя символической ссылки на</span>
<span class="t " style="left:4px;top:37px;letter-spacing:-0.017px;">каталог монтирования сетевых</span>
<span class="t " style="left:4px;top:53px;letter-spacing:0.053px;">дисков машины</span>
<span class="t " style="left:4px;top:86px;letter-spacing:-0.047px;">Если политика отключена или</span>
<span class="t " style="left:4px;top:102px;letter-spacing:-0.073px;">не сконфигурирована, по</span>
<span class="t " style="left:4px;top:119px;letter-spacing:0.108px;">умолчанию имя</span>
<span class="t " style="left:4px;top:135px;letter-spacing:-0.06px;">символической ссылки задано</span>
<span class="t " style="left:4px;top:151px;letter-spacing:-0.165px;">следующим образом:</span>
<span class="t " style="left:4px;top:185px;letter-spacing:-0.052px;">/media/gpupdate/{drives.system}</span>
<span class="t " style="left:4px;top:201px;letter-spacing:-0.235px;">— для системных сетевых</span>
<span class="t " style="left:4px;top:217px;letter-spacing:-0.073px;">дисков и /media/gpupdate/.</span>
<span class="t " style="left:4px;top:233px;letter-spacing:-0.233px;">{drives.system} — для скрытых</span>
<span class="t " style="left:4px;top:249px;letter-spacing:-0.14px;">системных сетевых дисков.</span>
<span class="t " style="left:4px;top:282px;letter-spacing:0.156px;">При включении политики</span>
<span class="t " style="left:4px;top:298px;letter-spacing:-0.108px;">"Отображение сетевых дисков</span>
</div>
<div class="sb" style="left:855px;top:358px;height:308px">
<div class="sbb" style="top:0"></div><div class="thumb" style="top:13px;height:142px"></div><div class="sbb" style="top:294px;border-top:1px solid #b4b4b4"></div>
</div>
<svg width="10" height="6" viewBox="0 0 10 6" style="left:857px;top:360.5px"><path d="M0.8 5.1H9.2L5 0.8Z" fill="#555"/></svg>
<svg width="10" height="6" viewBox="0 0 10 6" style="left:857px;top:656px"><path d="M0.8 0.9H9.2L5 5.2Z" fill="#555"/></svg>
<div class="btn" style="left:699px;top:673px;width:80px"></div>
<div class="btn" style="left:785px;top:673px;width:80px"></div>
<span class="t " style="left:716px;top:678px;letter-spacing:-0.109px;"><u>О</u>тмена</span>
<span class="t " style="left:817px;top:678px;letter-spacing:-0.898px;"><u>O</u>K</span>
<svg width="890" height="747" style="left:0;top:0;pointer-events:none"><rect x="861" y="726" width="1" height="1" fill="#a4a4a4"/><rect x="862" y="727" width="1" height="1" fill="#fafafa"/><rect x="864" y="723" width="1" height="1" fill="#a4a4a4"/><rect x="865" y="724" width="1" height="1" fill="#fafafa"/><rect x="864" y="726" width="1" height="1" fill="#a4a4a4"/><rect x="865" y="727" width="1" height="1" fill="#fafafa"/><rect x="867" y="720" width="1" height="1" fill="#a4a4a4"/><rect x="868" y="721" width="1" height="1" fill="#fafafa"/><rect x="867" y="723" width="1" height="1" fill="#a4a4a4"/><rect x="868" y="724" width="1" height="1" fill="#fafafa"/><rect x="867" y="726" width="1" height="1" fill="#a4a4a4"/><rect x="868" y="727" width="1" height="1" fill="#fafafa"/><rect x="870" y="717" width="1" height="1" fill="#a4a4a4"/><rect x="871" y="718" width="1" height="1" fill="#fafafa"/><rect x="870" y="720" width="1" height="1" fill="#a4a4a4"/><rect x="871" y="721" width="1" height="1" fill="#fafafa"/><rect x="870" y="723" width="1" height="1" fill="#a4a4a4"/><rect x="871" y="724" width="1" height="1" fill="#fafafa"/><rect x="870" y="726" width="1" height="1" fill="#a4a4a4"/><rect x="871" y="727" width="1" height="1" fill="#fafafa"/><rect x="272" y="374" width="1" height="1" fill="#a9a9a9"/><rect x="653" y="383" width="1" height="1" fill="#a9a9a9"/><rect x="272" y="377" width="1" height="1" fill="#a9a9a9"/><rect x="653" y="386" width="1" height="1" fill="#a9a9a9"/><rect x="272" y="380" width="1" height="1" fill="#a9a9a9"/><rect x="653" y="389" width="1" height="1" fill="#a9a9a9"/><rect x="272" y="383" width="1" height="1" fill="#a9a9a9"/><rect x="653" y="392" width="1" height="1" fill="#a9a9a9"/><rect x="272" y="386" width="1" height="1" fill="#a9a9a9"/><rect x="653" y="395" width="1" height="1" fill="#a9a9a9"/><rect x="272" y="389" width="1" height="1" fill="#a9a9a9"/><rect x="653" y="398" width="1" height="1" fill="#a9a9a9"/></svg>
</body></html>
